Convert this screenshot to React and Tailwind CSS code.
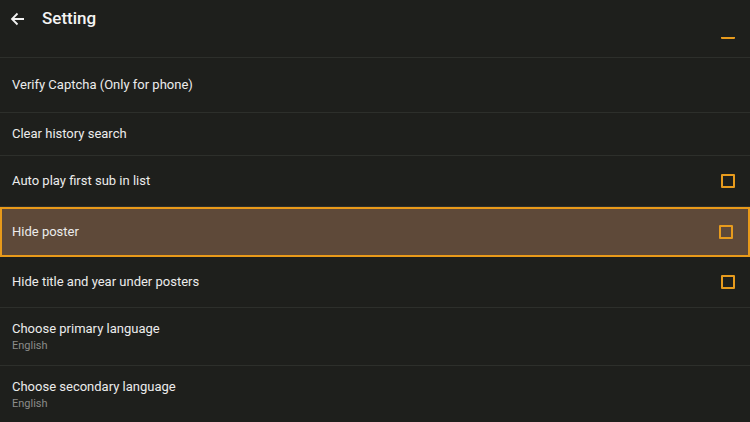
import React from "react";

const Check = () => (
    <div className="w-[14px] h-[14px] border-2 border-[#e79b1d] rounded-[1px] shrink-0" />
);

const Row = ({ title, sub, check, h, active }) => (
    <div
        className={
            "flex items-center justify-between pl-3 pr-[15px] " +
            h +
            (active ? " bg-[#5e4939] border-2 border-[#e99a1a] pl-[10px] pr-[13px]" : " border-b border-[#2d2f2b]")
        }
    >
        <div className="flex flex-col">
            <span className="text-[13px] text-[#ececec] leading-[16px]">{title}</span>
            {sub && <span className="text-[11px] text-[#8b8c8a] leading-[14px] mt-[2px]">{sub}</span>}
        </div>
        {check && <Check />}
    </div>
);

export default function App() {
    return (
        <div className="w-[750px] h-[422px] overflow-hidden bg-[#1e1f1c] font-['Roboto',sans-serif]">
            <div className="h-[37px] flex items-center px-[10px] pb-[1px] relative z-10 bg-[#1e1f1c]">
                <svg width="15" height="14" viewBox="0 0 15 14" className="mt-[1px]">
                    <path d="M14 7H2M7.5 1.5L2 7l5.5 5.5" stroke="#f2f2f2" strokeWidth="1.8" fill="none" />
                </svg>
                <span className="ml-[17px] text-[17px] text-[#f4f4f4] font-medium leading-none">Setting</span>
            </div>
            <div className="h-[21px] overflow-hidden border-b border-[#2d2f2b]">
                <div className="-mt-[30px] h-[50px] flex items-center justify-between pl-3 pr-[15px]">
                    <span className="text-[13px] text-[#ececec] leading-[16px] -mt-[4px]">Display only</span>
                    <Check />
                </div>
            </div>
            <Row h="h-[55px]" title="Verify Captcha (Only for phone)" />
            <Row h="h-[43px]" title="Clear history search" />
            <Row h="h-[51px]" title="Auto play first sub in list" check />
            <Row h="h-[50px]" title="Hide poster" check active />
            <Row h="h-[51px]" title="Hide title and year under posters" check />
            <Row h="h-[58px]" title="Choose primary language" sub="English" />
            <Row h="h-[58px]" title="Choose secondary language" sub="English" />
        </div>
    );
}
